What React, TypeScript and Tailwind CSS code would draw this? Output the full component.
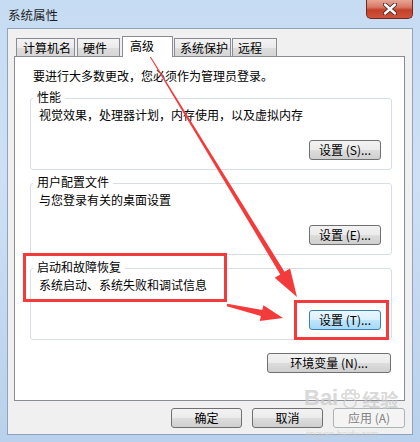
import React from "react";

const font = "font-['Noto_Sans_CJK_SC','Noto_Sans',sans-serif]";

const WinButton = ({ label, className = "", focus = false, disabled = false }: { label: string; className?: string; focus?: boolean; disabled?: boolean }) => {
  const look = focus
    ? "border-[#3c7fb1] bg-[linear-gradient(180deg,#eaf6fd_0%,#d9f0fc_50%,#bee6fd_51%,#a7d9f5_100%)]"
    : disabled
      ? "border-[#adb2b5] bg-[#f4f4f4] text-[#838383]"
      : "border-[#707070] bg-[linear-gradient(180deg,#f2f2f2_0%,#ebebeb_50%,#dddddd_51%,#cfcfcf_100%)]";
  return <div className={`flex h-[20px] items-center justify-center whitespace-pre rounded-[3px] border text-[12px] leading-[14px] ${look} ${className}`}>
    {label}
  </div>;
};

const GroupBox = ({ title, desc, button, focus = false, className = "" }: { title: string; desc: string; button: string; focus?: boolean; className?: string }) => {
  return <div className={`flex w-[362px] flex-col rounded-[3px] border border-[#d5dfe5] pb-[9px] ${className}`}>
    <span className="-mt-[9px] ml-[2px] h-[14px] w-fit bg-white px-[4px] leading-[14px]">{title}</span>
    <span className="mt-[3px] pl-[8px] leading-[16px]">{desc}</span>
    <WinButton label={button} focus={focus} className="mr-[10px] mt-[17px] w-[72px] self-end" />
  </div>;
};

const Tab = ({ label, width, className = "" }: { label: string; width: number; className?: string }) => {
  return <div
    className={`flex h-[18px] items-center border border-b-0 border-[#898c95] bg-[linear-gradient(180deg,#f3f3f3_0%,#ebebeb_50%,#dddddd_51%,#d6d6d6_100%)] pl-[5px] leading-[14px] ${className}`}
    style={{ width }}
  >
    {label}
  </div>;
};

const CloseButton = () => {
  return <div className="mr-[7px] flex h-[19px] w-[47px] items-center justify-center rounded-b-[5px] border border-t-0 border-[#6e2a21] bg-[linear-gradient(180deg,#e8a595_0%,#d77865_40%,#c4402a_55%,#d0533c_100%)]">
    <svg width="14" height="12" viewBox="0 0 14 12">
      <path d="M2 1.5 L12 10.5 M12 1.5 L2 10.5" stroke="#3a2a2a" strokeWidth="4.2" strokeLinecap="round" />
      <path d="M2 1.5 L12 10.5 M12 1.5 L2 10.5" stroke="#ffffff" strokeWidth="2.4" strokeLinecap="round" />
    </svg>
  </div>;
};

const App = () => {
  return <div className={`relative h-[442px] w-[420px] overflow-hidden bg-[linear-gradient(180deg,#c6dcf3_0%,#cde0f5_40%,#b9d1ec_100%)] text-[12px] text-black ${font}`}>
    <div className="flex h-[28px] items-start justify-between">
      <span className="ml-[8px] mt-[7px] text-[12.5px] leading-[16px] text-[#1e1e1e]">系统属性</span>
      <CloseButton />
    </div>

    <div className="mx-[7px] flex h-[407px] flex-col border border-[#8fa3bb] bg-[#f0f0f0]">
      <div className="ml-[8px] mt-[7px] flex h-[20px] items-end">
        <Tab label="计算机名" width={59} className="pl-[6px]" />
        <Tab label="硬件" width={43} className="ml-[2px]" />
        <div className="relative z-10 -mb-px ml-[2px] flex h-[21px] w-[51px] items-start border border-b-0 border-[#898c95] bg-white pl-[7px] pt-[2px] leading-[14px]">高级</div>
        <Tab label="系统保护" width={57} className="ml-px pl-[3px]" />
        <Tab label="远程" width={45} className="ml-px" />
      </div>

      <div className="ml-[6px] flex h-[345px] w-[391px] flex-col border border-[#898c95] bg-white">
        <span className="pl-[18px] pt-[11px] leading-[16px]">要进行大多数更改，您必须作为管理员登录。</span>
        <GroupBox className="ml-[15px] mt-[14px]" title="性能" desc="视觉效果，处理器计划，内存使用，以及虚拟内存" button="设置 (S)..." />
        <GroupBox className="ml-[15px] mt-[13px]" title="用户配置文件" desc="与您登录有关的桌面设置" button="设置 (E)..." />
        <GroupBox className="ml-[15px] mt-[13px]" title="启动和故障恢复" desc="系统启动、系统失败和调试信息" button="设置 (T)..." focus />
        <WinButton label="环境变量 (N)..." className="mr-[13px] mt-[13px] w-[124px] self-end" />
      </div>

      <div className="mt-[7px] flex justify-end gap-[10px] pr-[7px]">
        <WinButton label="确定" className="w-[71px]" />
        <WinButton label="取消" className="w-[71px]" />
        <WinButton label="应用 (A)" className="w-[72px]" disabled />
      </div>
    </div>

    <div className="pointer-events-none absolute left-[304px] top-[386px] flex items-end gap-[2px] text-[#c9c9c9] opacity-70">
      <span className="font-['Liberation_Sans',sans-serif] text-[22px] font-bold leading-[24px]">Bai</span>
      <svg width="20" height="22" viewBox="0 0 20 22">
        <g fill="none" stroke="#c9c9c9" strokeWidth="1.5">
          <ellipse cx="10" cy="15" rx="6" ry="5" />
          <circle cx="4" cy="8" r="2.2" />
          <circle cx="8" cy="4" r="2.2" />
          <circle cx="13" cy="4" r="2.2" />
          <circle cx="17" cy="8" r="2.2" />
        </g>
      </svg>
      <span className="text-[18px] font-bold leading-[22px]">经验</span>
    </div>
    <span className="pointer-events-none absolute left-[306px] top-[429px] font-['Liberation_Sans',sans-serif] text-[9px] leading-[10px] text-[#cccccc] opacity-70">jingyan.baidu.com</span>

    <svg className="pointer-events-none absolute left-0 top-0" width="420" height="442" viewBox="0 0 420 442">
      <g fill="#f33b3b">
        <polygon points="147.6,53.3 280.3,274.4 274.7,277.8 297,297 290.1,268.4 284.5,271.8 148.4,52.7" />
        <polygon points="226.8,306.2 260.9,315.9 259.8,321 283,318 263.4,305.2 262.3,310.1 227.2,303.8" />
      </g>
      <g fill="none" stroke="#f33b3b" strokeWidth="3">
        <rect x="24.5" y="254.5" width="201" height="46" />
        <rect x="295.5" y="301.5" width="92" height="37" />
      </g>
    </svg>
  </div>;
};

export default App;
